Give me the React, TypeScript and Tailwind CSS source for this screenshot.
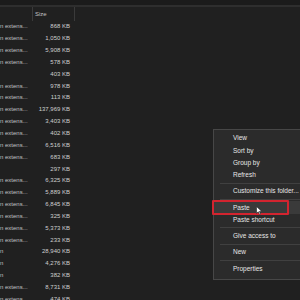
const rows: [string, string][] = [
  ['n extens...', '868 KB'],
  ['n extens...', '1,050 KB'],
  ['n extens...', '5,908 KB'],
  ['n extens...', '578 KB'],
  ['', '403 KB'],
  ['n extens...', '978 KB'],
  ['n extens...', '113 KB'],
  ['n extens...', '137,969 KB'],
  ['n extens...', '3,403 KB'],
  ['n extens...', '402 KB'],
  ['n extens...', '6,516 KB'],
  ['n extens...', '683 KB'],
  ['', '297 KB'],
  ['n extens...', '6,325 KB'],
  ['n extens...', '5,889 KB'],
  ['n extens...', '6,845 KB'],
  ['n extens...', '325 KB'],
  ['n extens...', '5,373 KB'],
  ['n extens...', '233 KB'],
  ['n', '28,940 KB'],
  ['n', '4,276 KB'],
  ['n', '382 KB'],
  ['n extens...', '8,731 KB'],
  ['n extens...', '474 KB'],
]

type MenuEntry = { label: string } | 'sep'

const menu: MenuEntry[] = [
  { label: 'View' },
  { label: 'Sort by' },
  { label: 'Group by' },
  { label: 'Refresh' },
  'sep',
  { label: 'Customize this folder...' },
  'sep',
  { label: 'Paste' },
  { label: 'Paste shortcut' },
  'sep',
  { label: 'Give access to' },
  'sep',
  { label: 'New' },
  'sep',
  { label: 'Properties' },
]

export default function App() {
  return (
    <div
      className="relative w-[300px] h-[300px] overflow-hidden bg-[#202020] text-[#cfcfcf]"
      style={{ fontFamily: '"Liberation Sans", Arial, sans-serif' }}
    >
      {/* top strip */}
      <div className="h-[5px] bg-[#1b1b1b]" />
      <div className="h-[2px] bg-[#2e2e2e]" />

      {/* header */}
      <div className="flex h-[14px] items-center text-[6px] text-[#c4c4c4]">
        <div className="w-[32px] h-full" />
        <div className="w-px h-full bg-[#3a3a3a]" />
        <div className="w-[41px] pl-[2px]">Size</div>
        <div className="w-px h-full bg-[#3a3a3a]" />
      </div>

      {/* rows */}
      <div className="flex flex-col text-[6px]">
        {rows.map(([name, size], i) => (
          <div key={i} className="flex h-[11.85px] items-center">
            <div className="w-[30px] whitespace-nowrap overflow-hidden text-[#c2c2c2]">{name}</div>
            <div className="w-[40px] text-right whitespace-nowrap">{size}</div>
          </div>
        ))}
      </div>

      {/* context menu */}
      <div className="absolute left-[213px] top-[129px] w-[100px] border border-[#474747] bg-[#2b2b2b] pt-[2px] pb-[4px] text-[6.5px] text-[#e6e6e6]">
        {menu.map((m, i) =>
          m === 'sep' ? (
            <div key={i} className="h-[4px] flex items-center pl-[6px]">
              <div className="h-px w-full bg-[#404040]" />
            </div>
          ) : (
            <div
              key={i}
              className={`h-[12.25px] flex items-center pl-[19px] whitespace-nowrap ${m.label === 'Paste' ? 'bg-[#3a3a3a]' : ''}`}
            >
              {m.label}
            </div>
          ),
        )}
      </div>

      {/* red annotation box */}
      <div className="absolute left-[212px] top-[200px] w-[77px] h-[15px] border-2 border-[#d3242f] rounded-[1px]" />

      {/* mouse cursor */}
      <svg className="absolute left-[256px] top-[206px]" width="7" height="9" viewBox="0 0 7 9">
        <path d="M0.5 0.5 L0.5 7.5 L2.2 5.8 L3.6 8.5 L4.6 8 L3.3 5.4 L5.8 5.4 Z" fill="#ffffff" stroke="#222" strokeWidth="0.6" />
      </svg>
    </div>
  )
}
